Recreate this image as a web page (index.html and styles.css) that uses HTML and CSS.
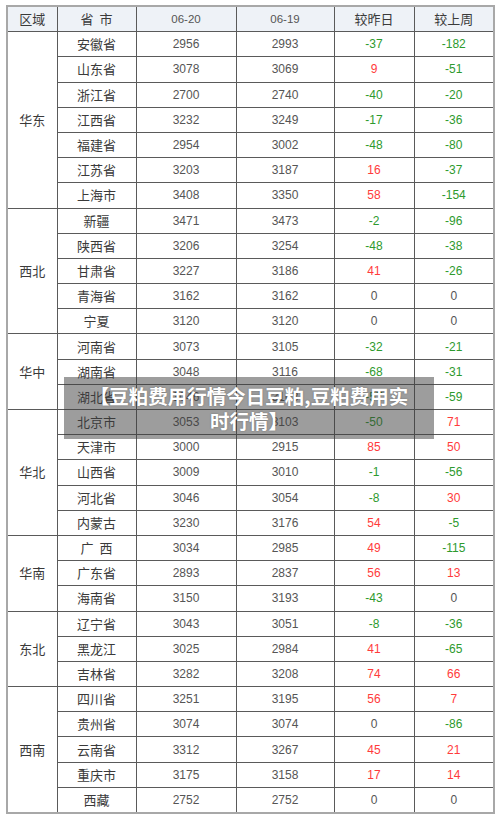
FILE: index.html
```html
<!DOCTYPE html>
<html lang="zh-CN">
<head>
<meta charset="utf-8">
<title>豆粕费用行情</title>
<link rel="stylesheet" href="styles.css">
</head>
<body>
<div class="wrap">
<table class="price">
<colgroup>
<col class="c1"><col class="c2"><col class="c3"><col class="c4"><col class="c5"><col class="c6">
</colgroup>
<thead>
<tr><th>区域</th><th>省&nbsp;&nbsp;市</th><th class="num">06-20</th><th class="num">06-19</th><th>较昨日</th><th>较上周</th></tr>
</thead>
<tbody>
<tr><td class="region" rowspan="7">华东</td><td>安徽省</td><td class="num">2956</td><td class="num">2993</td><td class="num down">-37</td><td class="num down">-182</td></tr>
<tr><td>山东省</td><td class="num">3078</td><td class="num">3069</td><td class="num up">9</td><td class="num down">-51</td></tr>
<tr><td>浙江省</td><td class="num">2700</td><td class="num">2740</td><td class="num down">-40</td><td class="num down">-20</td></tr>
<tr><td>江西省</td><td class="num">3232</td><td class="num">3249</td><td class="num down">-17</td><td class="num down">-36</td></tr>
<tr><td>福建省</td><td class="num">2954</td><td class="num">3002</td><td class="num down">-48</td><td class="num down">-80</td></tr>
<tr><td>江苏省</td><td class="num">3203</td><td class="num">3187</td><td class="num up">16</td><td class="num down">-37</td></tr>
<tr><td>上海市</td><td class="num">3408</td><td class="num">3350</td><td class="num up">58</td><td class="num down">-154</td></tr>

<tr><td class="region" rowspan="5">西北</td><td>新疆</td><td class="num">3471</td><td class="num">3473</td><td class="num down">-2</td><td class="num down">-96</td></tr>
<tr><td>陕西省</td><td class="num">3206</td><td class="num">3254</td><td class="num down">-48</td><td class="num down">-38</td></tr>
<tr><td>甘肃省</td><td class="num">3227</td><td class="num">3186</td><td class="num up">41</td><td class="num down">-26</td></tr>
<tr><td>青海省</td><td class="num">3162</td><td class="num">3162</td><td class="num">0</td><td class="num">0</td></tr>
<tr><td>宁夏</td><td class="num">3120</td><td class="num">3120</td><td class="num">0</td><td class="num">0</td></tr>

<tr><td class="region" rowspan="3">华中</td><td>河南省</td><td class="num">3073</td><td class="num">3105</td><td class="num down">-32</td><td class="num down">-21</td></tr>
<tr><td>湖南省</td><td class="num">3048</td><td class="num">3116</td><td class="num down">-68</td><td class="num down">-31</td></tr>
<tr><td>湖北省</td><td class="num">3046</td><td class="num">3103</td><td class="num down">-57</td><td class="num down">-59</td></tr>

<tr><td class="region" rowspan="5">华北</td><td>北京市</td><td class="num">3053</td><td class="num">3103</td><td class="num down">-50</td><td class="num up">71</td></tr>
<tr><td>天津市</td><td class="num">3000</td><td class="num">2915</td><td class="num up">85</td><td class="num up">50</td></tr>
<tr><td>山西省</td><td class="num">3009</td><td class="num">3010</td><td class="num down">-1</td><td class="num down">-56</td></tr>
<tr><td>河北省</td><td class="num">3046</td><td class="num">3054</td><td class="num down">-8</td><td class="num up">30</td></tr>
<tr><td>内蒙古</td><td class="num">3230</td><td class="num">3176</td><td class="num up">54</td><td class="num down">-5</td></tr>

<tr><td class="region" rowspan="3">华南</td><td>广&nbsp;&nbsp;西</td><td class="num">3034</td><td class="num">2985</td><td class="num up">49</td><td class="num down">-115</td></tr>
<tr><td>广东省</td><td class="num">2893</td><td class="num">2837</td><td class="num up">56</td><td class="num up">13</td></tr>
<tr><td>海南省</td><td class="num">3150</td><td class="num">3193</td><td class="num down">-43</td><td class="num">0</td></tr>

<tr><td class="region" rowspan="3">东北</td><td>辽宁省</td><td class="num">3043</td><td class="num">3051</td><td class="num down">-8</td><td class="num down">-36</td></tr>
<tr><td>黑龙江</td><td class="num">3025</td><td class="num">2984</td><td class="num up">41</td><td class="num down">-65</td></tr>
<tr><td>吉林省</td><td class="num">3282</td><td class="num">3208</td><td class="num up">74</td><td class="num up">66</td></tr>

<tr><td class="region" rowspan="5">西南</td><td>四川省</td><td class="num">3251</td><td class="num">3195</td><td class="num up">56</td><td class="num up">7</td></tr>
<tr><td>贵州省</td><td class="num">3074</td><td class="num">3074</td><td class="num">0</td><td class="num down">-86</td></tr>
<tr><td>云南省</td><td class="num">3312</td><td class="num">3267</td><td class="num up">45</td><td class="num up">21</td></tr>
<tr><td>重庆市</td><td class="num">3175</td><td class="num">3158</td><td class="num up">17</td><td class="num up">14</td></tr>
<tr><td>西藏</td><td class="num">2752</td><td class="num">2752</td><td class="num">0</td><td class="num">0</td></tr>
</tbody>
</table>
<div class="caption">【豆粕费用行情今日豆粕,豆粕费用实<br>时行情】</div>
</div>
</body>
</html>
```
FILE: styles.css
```css
html, body {
  margin: 0;
  padding: 0;
  background: #ffffff;
}
.wrap {
  position: relative;
  padding: 5px 0 0 6px;
}
.price {
  border-collapse: collapse;
  table-layout: fixed;
  width: 488px;
  border: 2px solid #a8a8a8;
  font-family: "Noto Sans CJK SC", "Liberation Sans", sans-serif;
  font-size: 13px;
  color: #3a3a3a;
}
.c1 { width: 50px; }
.c2 { width: 79px; }
.c3 { width: 100px; }
.c4 { width: 98px; }
.c5 { width: 80px; }
.c6 { width: 80px; }
.price th, .price td {
  border: 1px solid #5a5a5a;
  padding: 0;
  height: 24.2px;
  text-align: center;
  vertical-align: middle;
  line-height: 16px;
  white-space: nowrap;
}
.price th {
  background: #eef2f7;
  font-weight: normal;
  color: #3a3a3a;
}
.price thead th {
  border-top: 2px solid #a8a8a8;
}
.price .num {
  font-family: "Liberation Sans", sans-serif;
  font-size: 12px;
  color: #555555;
}
.price th.num {
  font-size: 11.5px;
}
.price .up { color: #ff3b3b; }
.price .down { color: #2e9a2e; }
.caption {
  position: absolute;
  left: 64px;
  top: 377px;
  width: 370px;
  height: 62px;
  box-sizing: border-box;
  padding-top: 6px;
  background: rgba(60, 60, 60, 0.5);
  color: #ffffff;
  font-family: "Noto Sans CJK SC", sans-serif;
  font-weight: bold;
  font-size: 19.5px;
  line-height: 25px;
  text-align: center;
  text-shadow: 0 0 2px rgba(0,0,0,0.3);
}
```
